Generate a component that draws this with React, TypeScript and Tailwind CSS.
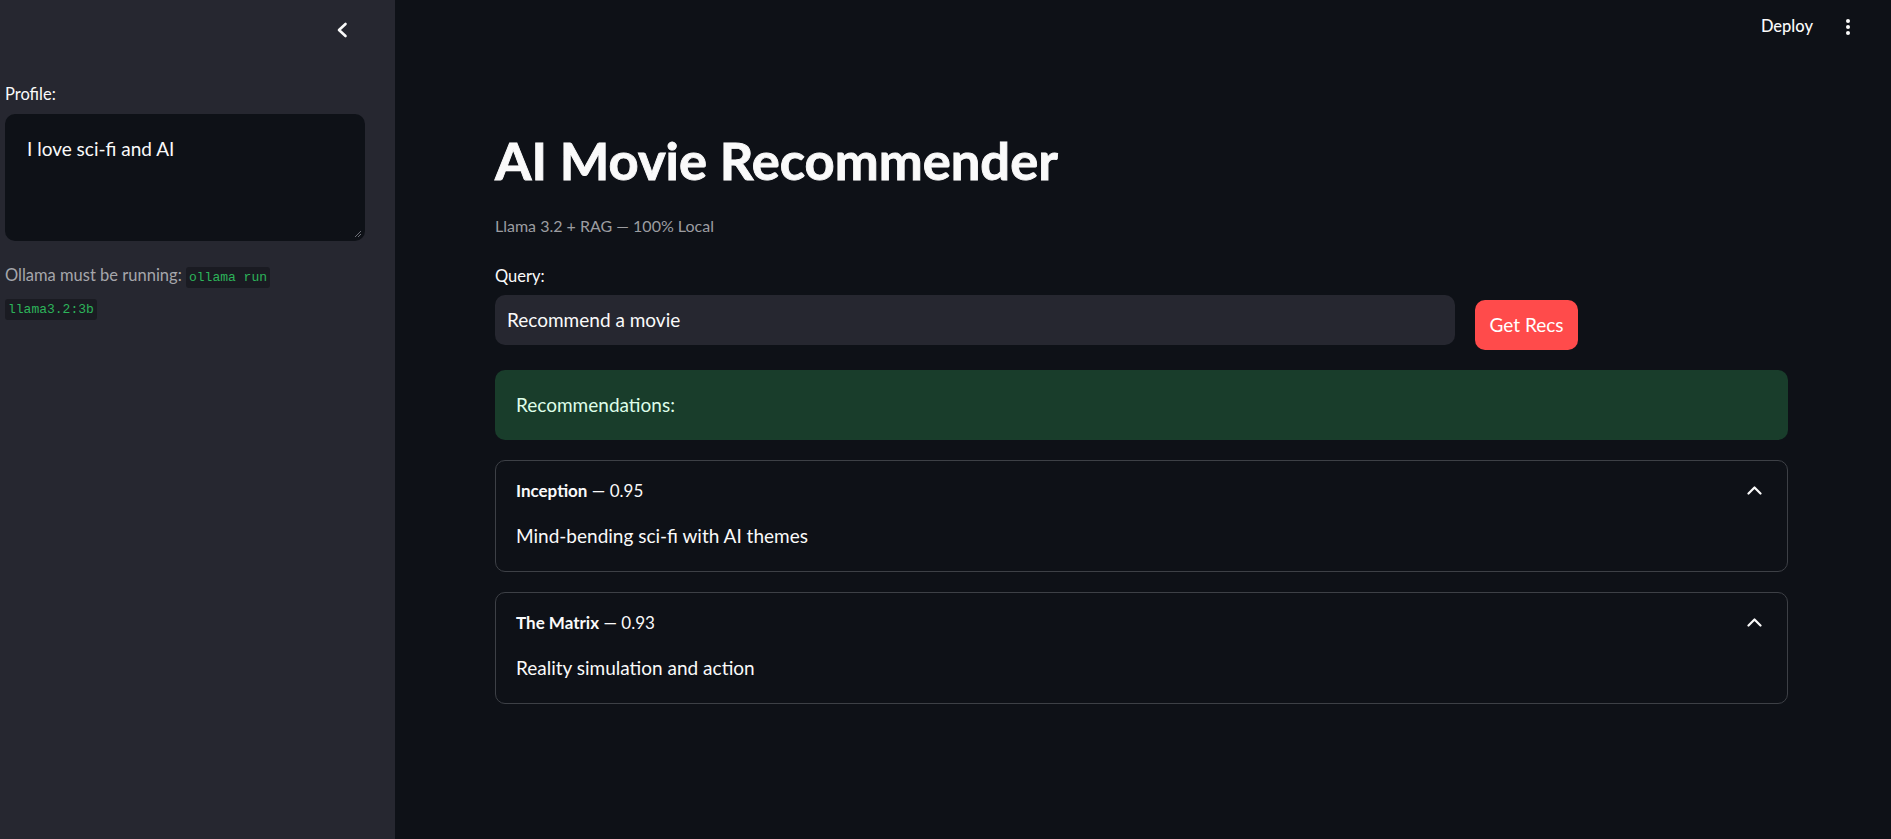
import React from "react";

function ChevronUp() {
  return (
    <svg width="15" height="9" viewBox="0 0 15 9" fill="none" className="block">
      <polyline points="1.5,7.5 7.5,1.5 13.5,7.5" stroke="#fafafa" strokeWidth="2.2" strokeLinecap="round" strokeLinejoin="round" />
    </svg>
  );
}

function Expander({ title, score, body }: { title: string; score: string; body: string }) {
  return (
    <div className="h-[112px] rounded-[10px] border border-[#3d4046]">
      <div className="flex h-[59px] items-center justify-between pl-[20px] pr-[25px]">
        <div className="text-[17px] leading-[24px] text-[#fafafa]">
          <span className="font-bold">{title}</span>
          <span> — {score}</span>
        </div>
        <ChevronUp />
      </div>
      <div className="mt-[2px] pl-[20px] text-[19px] leading-[28px] text-[#fafafa]">{body}</div>
    </div>
  );
}

export default function App() {
  return (
    <div className="flex h-[839px] w-full overflow-hidden bg-[#0e1117] [font-family:Lato,sans-serif] text-[#fafafa]">
      {/* Sidebar */}
      <aside className="flex h-full w-[395px] shrink-0 flex-col bg-[#262730] pl-[5px] pr-[30px]">
        <div className="flex h-[59px] items-center justify-end pr-[17px]">
          <svg width="12" height="16" viewBox="0 0 12 16" fill="none" className="block">
            <polyline points="9.5,2 3,8 9.5,14" stroke="#fafafa" strokeWidth="2.6" strokeLinecap="round" strokeLinejoin="round" />
          </svg>
        </div>
        <div className="mt-[23px] text-[16.5px] leading-[24px] text-[#fafafa]">Profile:</div>
        <div className="relative mt-[8px] h-[127px] w-[360px] rounded-[10px] bg-[#0e1117] px-[22px] pt-[21px]">
          <div className="text-[19px] leading-[28px] text-[#fafafa]">I love sci-fi and AI</div>
          <svg width="8" height="8" viewBox="0 0 8 8" className="absolute bottom-[3px] right-[3px]">
            <line x1="1" y1="7" x2="7" y2="1" stroke="#6b6d75" strokeWidth="1" />
            <line x1="4" y1="7" x2="7" y2="4" stroke="#6b6d75" strokeWidth="1" />
          </svg>
        </div>
        <div className="mt-[20px] text-[16.5px] leading-[28.5px] text-[#a5a6ab]">
          <span>Ollama must be running: </span>
          <span className="rounded-[3px] bg-[#1a1b22] px-[3px] py-[3px] [font-family:'Liberation_Mono',monospace] text-[13px] text-[#2db35a]">ollama run</span>
          <br />
          <span className="rounded-[3px] bg-[#1a1b22] px-[3px] py-[3px] [font-family:'Liberation_Mono',monospace] text-[13px] text-[#2db35a]">llama3.2:3b</span>
        </div>
      </aside>

      {/* Main */}
      <main className="flex min-w-0 flex-1 flex-col">
        <header className="flex h-[53px] items-center justify-end">
          <span className="text-[16.5px] font-medium text-[#fafafa]">Deploy</span>
          <div className="ml-[33px] mr-[41px] flex flex-col gap-[2px]">
            <span className="block h-[4px] w-[4px] rounded-full bg-[#fafafa]" />
            <span className="block h-[4px] w-[4px] rounded-full bg-[#fafafa]" />
            <span className="block h-[4px] w-[4px] rounded-full bg-[#fafafa]" />
          </div>
        </header>

        <div className="flex flex-col pl-[100px] pr-[103px]">
          <h1 className="mt-[75px] text-[52.5px] font-bold leading-[64px] text-[#fafafa] [-webkit-text-stroke:0.9px_#fafafa]">AI Movie Recommender</h1>
          <p className="mt-[22px] text-[16px] leading-[24px] text-[#9c9da1]">Llama 3.2 + RAG — 100% Local</p>

          <div className="mt-[26px] flex items-start gap-[20px]">
            <div className="w-[960px]">
              <div className="text-[16.5px] leading-[24px] text-[#fafafa]">Query:</div>
              <div className="mt-[7px] flex h-[50px] items-center rounded-[10px] bg-[#262730] px-[12px] text-[19px] text-[#fafafa]">
                Recommend a movie
              </div>
            </div>
            <button className="mt-[36px] flex h-[50px] w-[103px] items-center justify-center rounded-[10px] bg-[#ff4b4b] text-[19px] text-white">
              Get Recs
            </button>
          </div>

          <div className="mt-[20px] flex h-[70px] items-center rounded-[10px] bg-[#193d2b] pl-[21px] text-[19px] text-[#dffde9]">
            Recommendations:
          </div>

          <div className="mt-[20px] flex flex-col gap-[20px]">
            <Expander title="Inception" score="0.95" body="Mind-bending sci-fi with AI themes" />
            <Expander title="The Matrix" score="0.93" body="Reality simulation and action" />
          </div>
        </div>
      </main>
    </div>
  );
}
